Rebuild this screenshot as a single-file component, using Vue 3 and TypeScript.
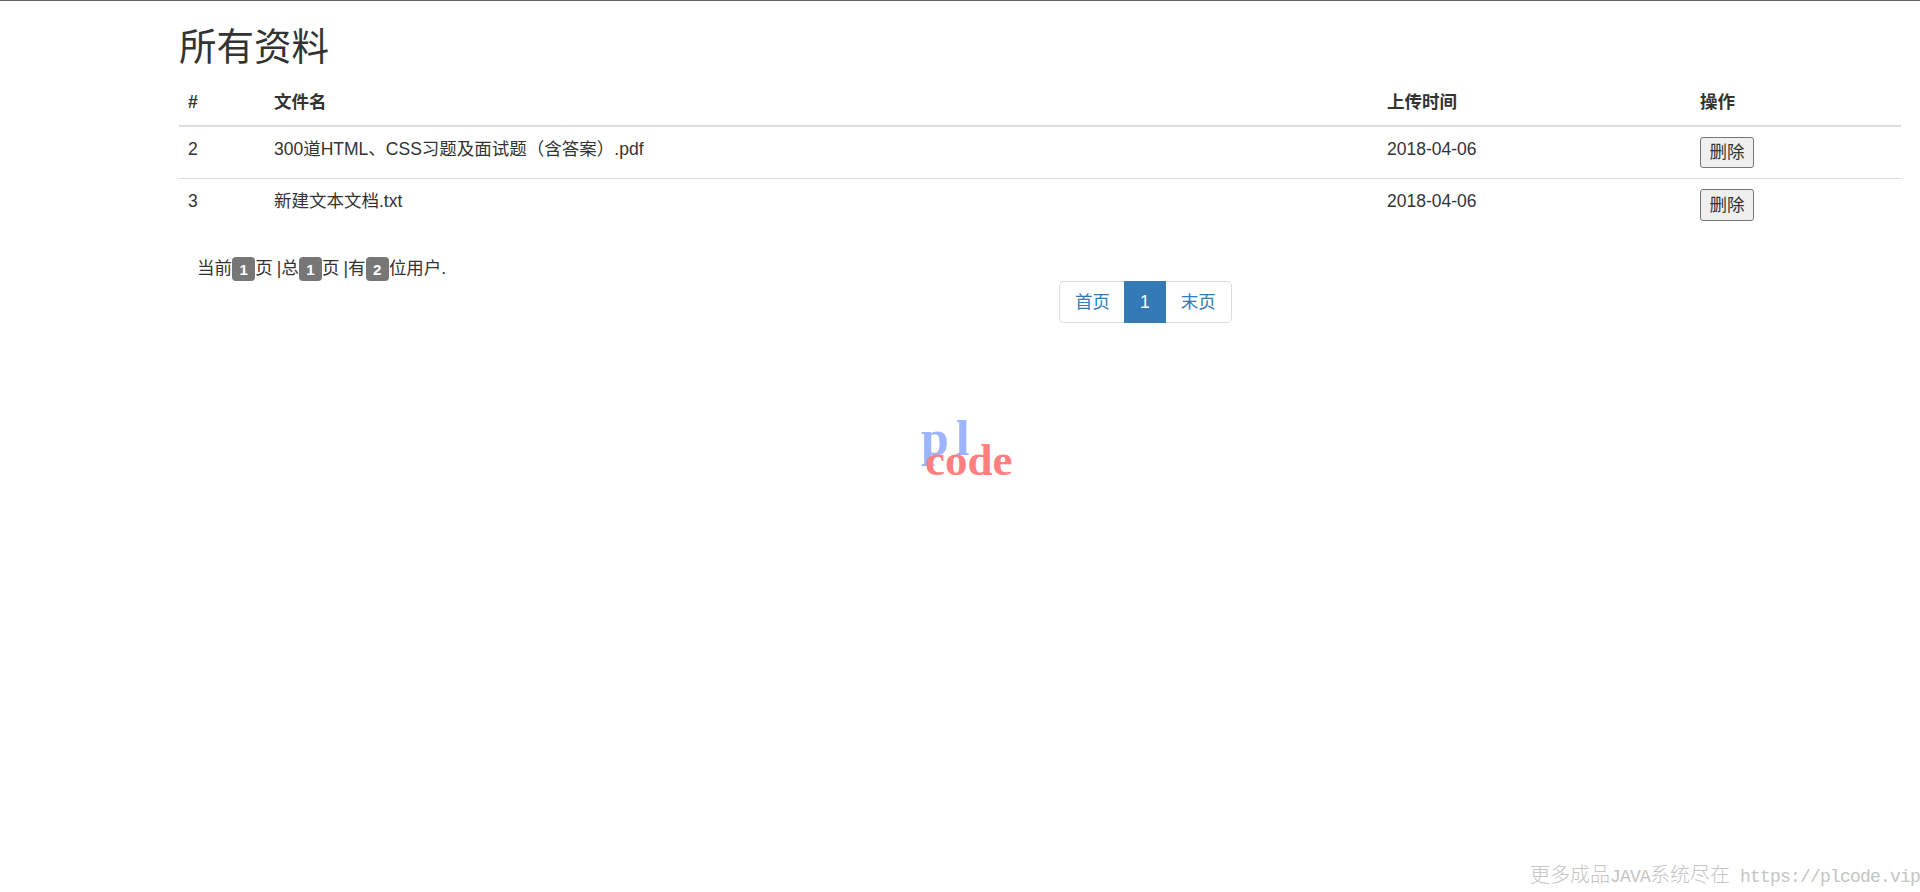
<script setup lang="ts">
interface FileRow {
  id: number
  name: string
  date: string
}

const rows: FileRow[] = [
  { id: 2, name: '300道HTML、CSS习题及面试题（含答案）.pdf', date: '2018-04-06' },
  { id: 3, name: '新建文本文档.txt', date: '2018-04-06' },
]
</script>

<template>
  <div class="page">
    <div class="container">
      <h2 class="title">所有资料</h2>
      <table class="table">
        <colgroup>
          <col class="col-id" />
          <col class="col-name" />
          <col class="col-date" />
          <col class="col-op" />
        </colgroup>
        <thead>
          <tr>
            <th>#</th>
            <th>文件名</th>
            <th>上传时间</th>
            <th>操作</th>
          </tr>
        </thead>
        <tbody>
          <tr v-for="row in rows" :key="row.id">
            <td>{{ row.id }}</td>
            <td>{{ row.name }}</td>
            <td>{{ row.date }}</td>
            <td><button class="del" type="button">删除</button></td>
          </tr>
        </tbody>
      </table>
      <div class="info">当前<span class="badge">1</span>页 |总<span class="badge">1</span>页 |有<span class="badge">2</span>位用户.</div>
      <ul class="pagination">
        <li class="first"><a>首页</a></li>
        <li class="active"><a>1</a></li>
        <li class="last"><a>末页</a></li>
      </ul>
    </div>
    <div class="logo">
      <span class="logo-pl">pl</span>
      <span class="logo-code">code</span>
    </div>
    <div class="watermark"><span class="cjk">更多成品</span>JAVA<span class="cjk">系统尽在</span> https://plcode.vip</div>
  </div>
</template>

<style scoped>
.page {
  position: relative;
  height: 891px;
  border-top: 1px solid #666;
  background: #fff;
  color: #333;
  font-family: "Liberation Sans", "Noto Sans CJK SC", sans-serif;
  font-size: 17.5px;
  line-height: 25px;
  overflow: hidden;
}

.container {
  margin-left: 179px;
  width: 1722px;
}

.title {
  margin: 26px 0 12px;
  font-size: 37.5px;
  font-weight: 400;
  line-height: 41px;
}

.table {
  width: 100%;
  table-layout: fixed;
  border-collapse: collapse;
  margin-bottom: 25px;
}

.col-id { width: 85px; }
.col-name { width: 1113px; }
.col-date { width: 313px; }
.col-op { width: 211px; }

th,
td {
  padding: 10px;
  text-align: left;
  vertical-align: top;
}

th:first-child,
td:first-child {
  padding-left: 9px;
}

th {
  font-weight: 700;
  border-bottom: 2px solid #ddd;
}

td {
  border-top: 1px solid #ddd;
}

thead + tbody tr:first-child td {
  border-top: 0;
}

.del {
  display: block;
  width: 54px;
  height: 31px;
  padding: 0;
  border: 1px solid #767676;
  border-radius: 3px;
  background: #efefef;
  color: #333;
  font: inherit;
}

tr:last-child .del {
  height: 32px;
}

.info {
  padding-left: 18px;
  word-spacing: -1px;
}

.badge {
  display: inline-block;
  padding: 4.5px 7.5px;
  border-radius: 4px;
  background: #777;
  color: #fff;
  font-size: 15px;
  font-weight: 700;
  line-height: 15px;
  text-align: center;
  vertical-align: middle;
  box-sizing: border-box;
}

.pagination {
  display: flex;
  width: max-content;
  margin: 0 0 0 880px;
  padding: 0;
  list-style: none;
}

.pagination a {
  display: block;
  height: 42px;
  padding: 8px 15px;
  box-sizing: border-box;
  border: 1px solid #ddd;
  color: #337ab7;
}

.pagination .first a {
  padding-right: 14px;
  border-radius: 5px 0 0 5px;
  border-right: 0;
}

.pagination .last a {
  border-radius: 0 5px 5px 0;
  border-left: 0;
}

.pagination .active a {
  border-color: #337ab7;
  background: #337ab7;
  color: #fff;
}

.logo {
  position: absolute;
  left: 920px;
  top: 412px;
  width: 100px;
  height: 75px;
  font-family: "Liberation Serif", serif;
  font-weight: 700;
}

.logo-pl {
  position: absolute;
  left: 1px;
  top: 0;
  color: #9db5ff;
  font-size: 50px;
  line-height: 50px;
  letter-spacing: 7px;
}

.logo-code {
  position: absolute;
  left: 5px;
  top: 25px;
  color: #ff7f7f;
  font-size: 45px;
  line-height: 44px;
}

.watermark {
  position: absolute;
  right: 0;
  bottom: 3px;
  color: #c4c4c4;
  font-family: "Liberation Mono", monospace;
  font-size: 18px;
  letter-spacing: -0.8px;
  line-height: 24px;
  white-space: pre;
}

.cjk {
  font-family: "Noto Sans CJK SC", sans-serif;
  font-size: 20px;
  font-weight: 300;
  letter-spacing: 0;
}
</style>
